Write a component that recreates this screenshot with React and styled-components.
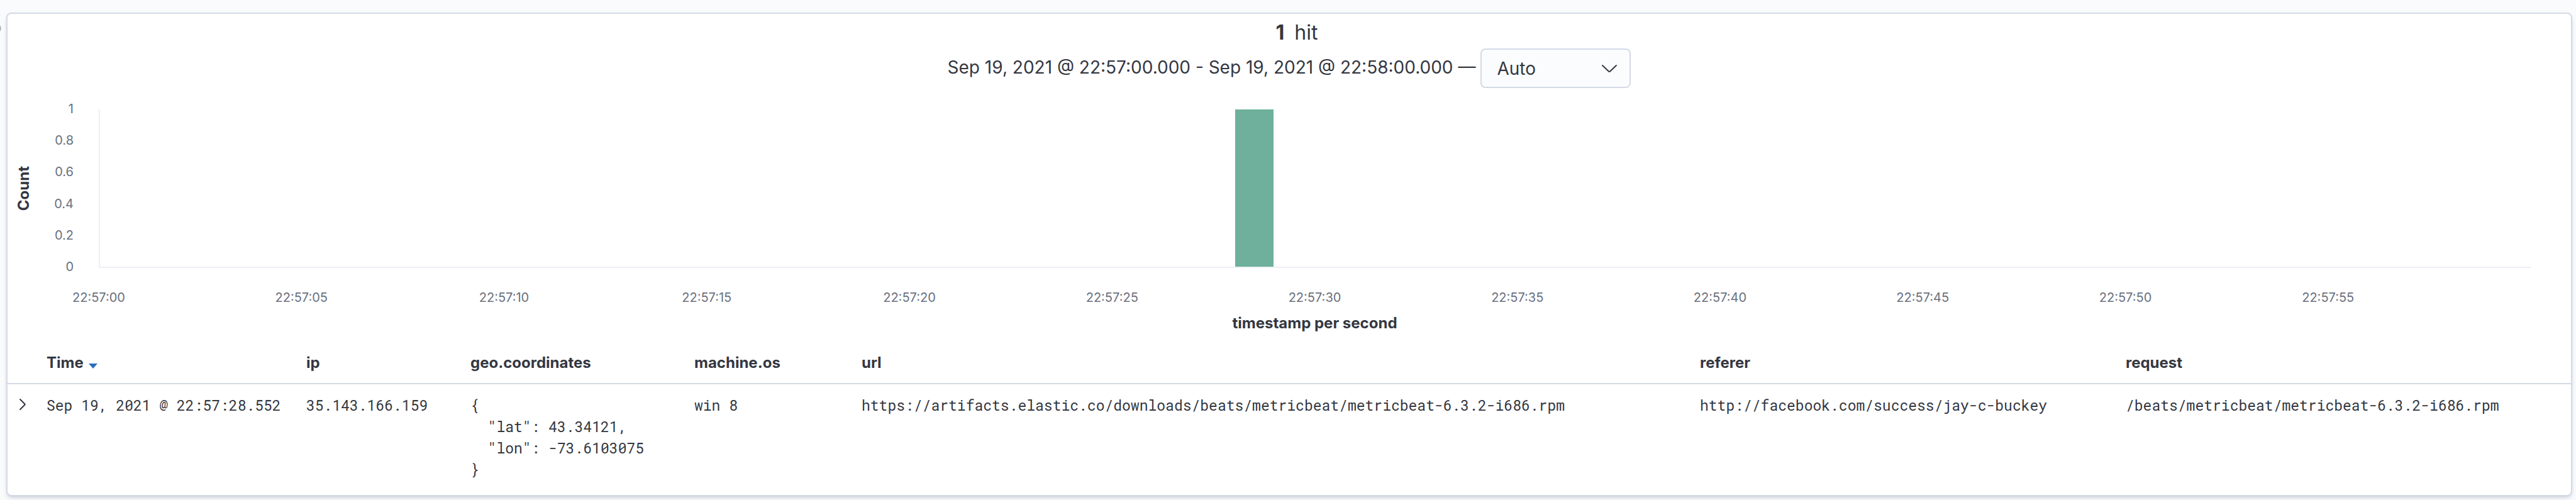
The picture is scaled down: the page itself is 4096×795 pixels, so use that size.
import React from "react";
import styled, { createGlobalStyle } from "styled-components";

const Global = createGlobalStyle`
  * { box-sizing: border-box; }
  html, body { margin: 0; min-height: 100%; }
  body {
    background: #fafbfd;
    color: #343741;
    font-family: Inter, "Liberation Sans", sans-serif;
  }
`;

const Page = styled.div`
  display: flex;
  align-items: stretch;
  min-height: 100vh;
  padding: 20px 6px 6px 0;
  overflow: hidden;
`;

const Gutter = styled.aside`
  flex: 0 0 10px;
  padding-top: 18px;
`;

const GutterIcon = styled.svg`
  display: block;
  width: 4px;
  height: 14px;
`;

const Panel = styled.main`
  flex: 1;
  min-width: 0;
  background: #fff;
  border: 2px solid #d3dae6;
  border-radius: 8px;
  box-shadow: 0 4px 8px -2px rgba(152, 162, 179, 0.4), 0 2px 4px -2px rgba(152, 162, 179, 0.4);
`;

const Hits = styled.h1`
  display: flex;
  justify-content: center;
  gap: 16px;
  margin: 0;
  padding: 8px 0 0 24px;
  font-size: 32px;
  line-height: 44px;
  font-weight: 400;

  strong { font-weight: 700; }
`;

const RangeBar = styled.div`
  display: flex;
  justify-content: center;
  align-items: center;
  gap: 8px;
  margin-top: 3px;
  font-size: 28px;
  line-height: 40px;
`;

const RangeText = styled.span`
  padding-bottom: 4px;
`;

const SelectBox = styled.label`
  position: relative;
  display: block;
  width: 239px;
`;

const Select = styled.select`
  appearance: none;
  display: block;
  width: 100%;
  height: 63px;
  padding: 0 24px;
  border: 2px solid #d3dae6;
  border-radius: 8px;
  background: #fbfcfd;
  color: inherit;
  font: inherit;
`;

const SelectArrow = styled.svg`
  position: absolute;
  right: 18px;
  top: 16px;
  width: 32px;
  height: 32px;
  pointer-events: none;
`;

const Chart = styled.section`
  display: grid;
  grid-template-columns: 28px 65px 1fr;
  grid-template-rows: 252px auto auto;
  column-gap: 20px;
  padding: 34px 64px 0 12px;
`;

const YTitle = styled.h2`
  margin: 0;
  align-self: center;
  justify-self: center;
  writing-mode: vertical-rl;
  transform: rotate(180deg);
  font-size: 24px;
  line-height: 28px;
  font-weight: 700;
`;

const YAxis = styled.div`
  display: flex;
  flex-direction: column;
  justify-content: space-between;
  align-items: flex-end;
  margin: -14px 20px -11px 0;
  color: #69707d;
  font-size: 20px;
  line-height: 26px;
`;

const Plot = styled.div`
  display: grid;
  grid-template-columns: repeat(60, 1fr);
  align-items: end;
  border-left: 2px solid #eeeff4;
  border-bottom: 2px solid #eeeff4;
`;

const Bar = styled.div`
  grid-column: ${(p) => p.$second + 1};
  height: 100%;
  margin: 0 2px 0 1px;
  background: #6eb09b;
`;

const XAxis = styled.div`
  grid-column: 3;
  display: grid;
  grid-template-columns: repeat(12, 1fr);
  padding-top: 34px;
  color: #69707d;
  font-size: 20px;
  line-height: 26px;
`;

const Tick = styled.span`
  justify-self: start;
  width: 100px;
  margin-left: -50px;
  text-align: center;
`;

const XTitle = styled.h2`
  grid-column: 3;
  margin: 0;
  padding-top: 14px;
  text-align: center;
  font-size: 24px;
  line-height: 28px;
  font-weight: 700;
`;

const Table = styled.table`
  width: 100%;
  margin-top: 22px;
  border-collapse: collapse;
  table-layout: fixed;
`;

const Col = styled.col`
  width: ${(p) => p.$w};
`;

const Th = styled.th`
  height: 60px;
  padding: 0 16px 6px;
  border-bottom: 2px solid #d3dae6;
  text-align: left;
  vertical-align: middle;
  white-space: nowrap;
  font-size: 24px;
  line-height: 32px;
  font-weight: 700;
`;

const SortButton = styled.button`
  display: inline-flex;
  align-items: center;
  gap: 8px;
  padding: 0;
  border: 0;
  background: none;
  color: inherit;
  font: inherit;
`;

const SortArrow = styled.svg`
  width: 14px;
  height: 8px;
  margin-top: 10px;
`;

const Td = styled.td`
  padding: 16px 16px 18px;
  vertical-align: top;
  white-space: pre;
  font-family: "Roboto Mono", "DejaVu Sans Mono", monospace;
  font-size: 23px;
  line-height: 34px;
`;

const ExpandButton = styled.button`
  display: block;
  margin: 4px 0 0;
  padding: 0;
  border: 0;
  background: none;
`;

const ExpandIcon = styled.svg`
  display: block;
  width: 24px;
  height: 24px;
`;

const ticks = ["00", "05", "10", "15", "20", "25", "30", "35", "40", "45", "50", "55"];

const columns = [
  { name: "ip", width: "261px", value: "35.143.166.159" },
  { name: "geo.coordinates", width: "356px", value: '{\n  "lat": 43.34121,\n  "lon": -73.6103075\n}' },
  { name: "machine.os", width: "266px", value: "win 8" },
  { name: "url", width: "1333px", value: "https://artifacts.elastic.co/downloads/beats/metricbeat/metricbeat-6.3.2-i686.rpm" },
  { name: "referer", width: "677px", value: "http://facebook.com/success/jay-c-buckey" },
  { name: "request", width: "auto", value: "/beats/metricbeat/metricbeat-6.3.2-i686.rpm" },
];

export default function App() {
  return (
    <>
      <Global />
      <Page>
        <Gutter>
          <GutterIcon viewBox="0 0 4 14" aria-hidden="true">
            <circle cx="-5" cy="7" r="6" fill="none" stroke="#b4b7be" strokeWidth="2" />
          </GutterIcon>
        </Gutter>
        <Panel>
          <Hits><strong>1</strong><span>hit</span></Hits>
          <RangeBar>
            <RangeText>Sep 19, 2021 @ 22:57:00.000 - Sep 19, 2021 @ 22:58:00.000 —</RangeText>
            <SelectBox>
              <Select aria-label="Interval" defaultValue="auto">
                <option value="auto">Auto</option>
              </Select>
              <SelectArrow viewBox="0 0 32 32" fill="none" stroke="#343741" strokeWidth="2" strokeLinecap="round" strokeLinejoin="round" aria-hidden="true">
                <path d="M5 11 L15 20.5 Q16 21.5 17 20.5 L27 11" />
              </SelectArrow>
            </SelectBox>
          </RangeBar>
          <Chart>
            <YTitle>Count</YTitle>
            <YAxis>
              {["1", "0.8", "0.6", "0.4", "0.2", "0"].map((v) => <span key={v}>{v}</span>)}
            </YAxis>
            <Plot><Bar $second={28} /></Plot>
            <XAxis>
              {ticks.map((t) => <Tick key={t}>22:57:{t}</Tick>)}
            </XAxis>
            <XTitle>timestamp per second</XTitle>
          </Chart>
          <Table>
            <colgroup>
              <Col $w="46px" />
              <Col $w="413px" />
              {columns.map((c) => <Col key={c.name} $w={c.width} />)}
            </colgroup>
            <thead>
              <tr>
                <Th as="td" />
                <Th scope="col">
                  <SortButton>
                    Time
                    <SortArrow viewBox="0 0 14 8" aria-hidden="true"><path d="M0 0H14L7 8Z" fill="#2a6ebb" /></SortArrow>
                  </SortButton>
                </Th>
                {columns.map((c) => <Th scope="col" key={c.name}>{c.name}</Th>)}
              </tr>
            </thead>
            <tbody>
              <tr>
                <Td>
                  <ExpandButton aria-label="Toggle row details">
                    <ExpandIcon viewBox="0 0 24 24" fill="none" stroke="#343741" strokeWidth="2" strokeLinecap="round" strokeLinejoin="round" aria-hidden="true">
                      <path d="M4 4 L11.5 11.5 Q12 12 11.5 12.5 L4 20" />
                    </ExpandIcon>
                  </ExpandButton>
                </Td>
                <Td>Sep 19, 2021 @ 22:57:28.552</Td>
                {columns.map((c) => <Td key={c.name}>{c.value}</Td>)}
              </tr>
            </tbody>
          </Table>
        </Panel>
      </Page>
    </>
  );
}
